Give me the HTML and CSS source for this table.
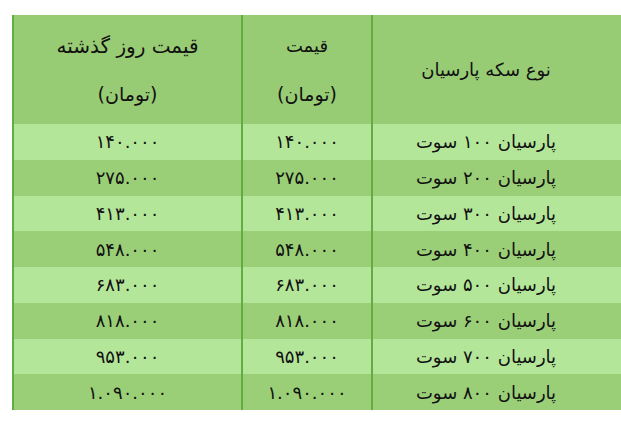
FILE: index.html
```html
<!DOCTYPE html>
<html lang="fa">
<head>
<meta charset="utf-8">
<link rel="stylesheet" href="styles.css">
</head>
<body>
<div class="wrap">
<table class="prices">
  <thead>
    <tr>
      <th class="c-name"><div class="line">نوع سکه پارسیان</div></th>
      <th class="c-now"><div class="line">قیمت</div><div class="line unit">(تومان)</div></th>
      <th class="c-prev"><div class="line wide">قیمت روز گذشته</div><div class="line unit">(تومان)</div></th>
    </tr>
  </thead>
  <tbody>
    <tr class="light"><td class="c-name">پارسیان ۱۰۰ سوت</td><td class="c-now">۱۴۰.۰۰۰</td><td class="c-prev">۱۴۰.۰۰۰</td></tr>
    <tr class="dark"><td class="c-name">پارسیان ۲۰۰ سوت</td><td class="c-now">۲۷۵.۰۰۰</td><td class="c-prev">۲۷۵.۰۰۰</td></tr>
    <tr class="light"><td class="c-name">پارسیان ۳۰۰ سوت</td><td class="c-now">۴۱۳.۰۰۰</td><td class="c-prev">۴۱۳.۰۰۰</td></tr>
    <tr class="dark"><td class="c-name">پارسیان ۴۰۰ سوت</td><td class="c-now">۵۴۸.۰۰۰</td><td class="c-prev">۵۴۸.۰۰۰</td></tr>
    <tr class="light"><td class="c-name">پارسیان ۵۰۰ سوت</td><td class="c-now">۶۸۳.۰۰۰</td><td class="c-prev">۶۸۳.۰۰۰</td></tr>
    <tr class="dark"><td class="c-name">پارسیان ۶۰۰ سوت</td><td class="c-now">۸۱۸.۰۰۰</td><td class="c-prev">۸۱۸.۰۰۰</td></tr>
    <tr class="light"><td class="c-name">پارسیان ۷۰۰ سوت</td><td class="c-now">۹۵۳.۰۰۰</td><td class="c-prev">۹۵۳.۰۰۰</td></tr>
    <tr class="dark"><td class="c-name">پارسیان ۸۰۰ سوت</td><td class="c-now">۱.۰۹۰.۰۰۰</td><td class="c-prev">۱.۰۹۰.۰۰۰</td></tr>
  </tbody>
</table>
</div>
</body>
</html>
```
FILE: styles.css
```css
html, body {
  margin: 0;
  padding: 0;
  background: #ffffff;
  overflow: hidden;
}
body {
  width: 621px;
  height: 437px;
  font-family: "DejaVu Sans", "Noto Sans", sans-serif;
  color: #111111;
}
.wrap {
  margin: 15px 0 0 12px;
  width: 609px;
  overflow: hidden;
}
.prices {
  direction: rtl;
  border-collapse: collapse;
  table-layout: fixed;
  width: 630px;
  border-left: 2px solid #62ad43;
}
.prices th,
.prices td {
  padding: 0;
  text-align: center;
  vertical-align: middle;
  font-weight: normal;
  font-size: 18px;
}
.prices thead tr {
  height: 109px;
  background: #98cc74;
}
.prices tbody tr {
  height: 35.75px;
}
.prices .line {
  line-height: 48px;
}
.prices .wide {
  font-size: 20px;
}
.prices .unit {
  font-size: 19px;
}
.prices .c-name {
  width: 226px;
  padding-right: 43px;
}
.c-now {
  width: 128px;
  border-left: 2px solid #62ad43;
  border-right: 2px solid #62ad43;
}
.c-prev {
  width: 227px;
}
.light {
  background: #b4e69a;
}
.dark {
  background: #9bcf77;
}
```
